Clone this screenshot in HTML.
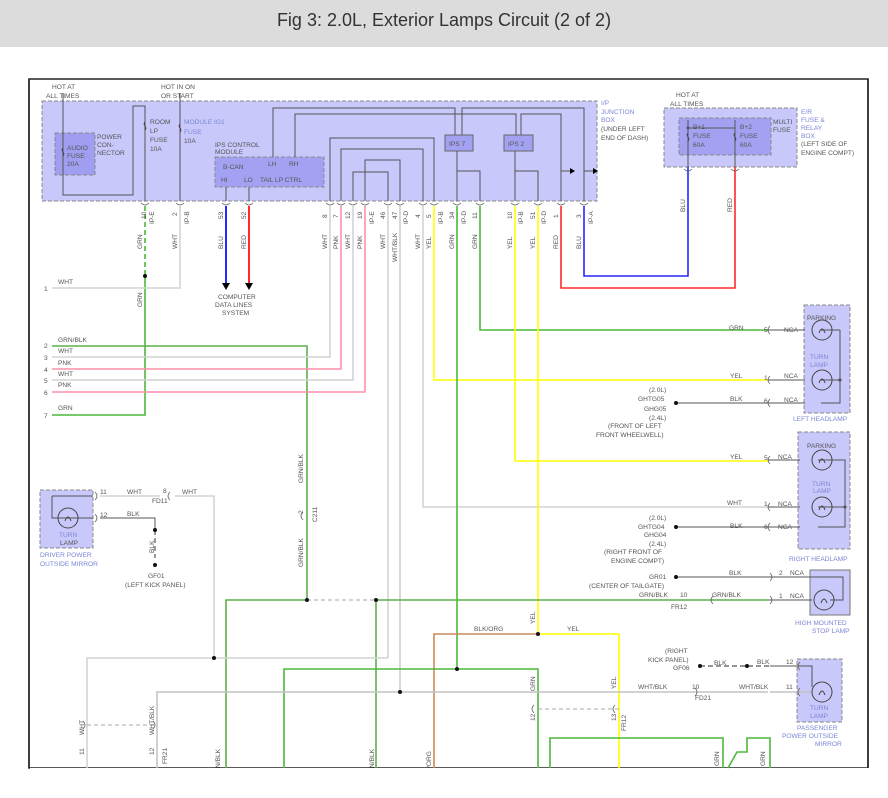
<!DOCTYPE html>
<html><head><meta charset="utf-8"><style>
html,body{margin:0;padding:0;background:#fff;width:888px;height:798px;overflow:hidden}
.t{position:absolute;left:0;top:0;width:888px;height:47px;background:#dcdcdc;font-family:"Liberation Sans",sans-serif;font-size:18px;color:#333;text-align:center;line-height:40px}
svg{position:absolute;left:0;top:0}
text{font-family:"Liberation Sans",sans-serif;font-size:6.6px;fill:#555}
.b{fill:#7b86d6}
</style></head><body>
<div class="t">Fig 3: 2.0L, Exterior Lamps Circuit (2 of 2)</div>
<svg width="888" height="798" viewBox="0 0 888 798">
<rect x="29" y="79" width="839" height="689" fill="#fff" stroke="#222" stroke-width="1.5"/>
<rect x="30" y="768" width="840" height="30" fill="#fff"/>
<line x1="29" y1="79" x2="29" y2="768" stroke="#222" stroke-width="1.5"/>
<line x1="868" y1="79" x2="868" y2="768" stroke="#222" stroke-width="1.5"/>
<g stroke="#888" stroke-dasharray="4,2" stroke-width="1">
<rect x="42" y="101" width="555" height="100" fill="#c9c8fa"/>
<rect x="55" y="133" width="40" height="42" fill="#9f9ef0"/>
<rect x="215" y="157" width="109" height="30" fill="#a3a2f2"/>
<rect x="664" y="108" width="133" height="59" fill="#c9c8fa"/>
<rect x="679" y="118" width="92" height="37" fill="#a3a2f2"/>
<rect x="804" y="305" width="46" height="108" fill="#c9c8fa"/>
<rect x="798" y="432" width="52" height="117" fill="#c9c8fa"/>
<rect x="797" y="659" width="45" height="63" fill="#c9c8fa"/>
<rect x="40" y="490" width="53" height="58" fill="#c9c8fa"/>
</g>
<rect x="810" y="570" width="40" height="45" fill="#c9c8fa" stroke="#777"/>
<rect x="445" y="135" width="28" height="16" fill="#a3a2f2" stroke="#666"/>
<rect x="504" y="135" width="29" height="16" fill="#a3a2f2" stroke="#666"/>
<g stroke="#555" fill="none" stroke-width="1">
<path d="M63 93V195H133V106H145V201"/>
<path d="M180 93V201"/>
<path d="M273 157V108H455V135"/>
<path d="M295 157V114H516V135"/>
<path d="M462 135V108H584V201"/>
<path d="M521 135V114H561V201"/>
<path d="M457 151V201M457 171H480V201M515 151V201M515 171H538V201"/>
<path d="M561 171H570M584 171H593"/>
<path d="M330 201V138H434V201M341 201V149H423V201M365 201V160H400V201M353 201V172H388V201"/>
<path d="M226 187V201M249 187V201"/>
<path d="M688 120V167M735 120V167M688 128H735"/>
<path d="M821 330H840M821 380H840M821 403H840M840 330V403H827M768 330H805M768 380H805M768 403H805"/>
<path d="M818 460H845V507H818M845 507V527H818M768 460H800M768 507H800M768 527H800"/>
<path d="M768 577H812M768 600H812M812 577H843V600H830"/>
<path d="M770 666H812V687M770 692H812"/>
<path d="M52 496H93M52 496V518H93M66 518H93"/>
<path d="M100 518H155V530"/>
<path d="M676 403H768M676 527H768M676 577H768"/>
</g>
<g fill="#555"><circle cx="840" cy="380" r="1.6"/><circle cx="845" cy="507" r="1.6"/><circle cx="688" cy="128" r="1.5"/></g>
<g stroke="#444" fill="none"><path d="M63 148c-3 3 3 5 0 8"/><path d="M145 122c-3 3 3 5 0 8"/><path d="M180 124c-3 3 3 5 0 8"/><path d="M688 133c-3 3 3 5 0 8"/><path d="M735 133c-3 3 3 5 0 8"/></g>
<g fill="none" stroke-width="1.6">
<path d="M145 206V276" stroke="#4cb83a" stroke-dasharray="5,3"/>
<path d="M145 276V415H52" stroke="#4cb83a"/>
<path d="M180 206V288H52" stroke="#d4d4d4"/>
<path d="M226 206V283" stroke="#2727ff" stroke-width="2"/>
<path d="M249 206V283" stroke="#ff2a2a" stroke-width="2"/>
<path d="M52 346H307V600" stroke="#5cb04a"/>
<path d="M52 357H330V206" stroke="#d4d4d4"/>
<path d="M52 369H341V206" stroke="#ff8fa8"/>
<path d="M52 380H353V206" stroke="#d4d4d4"/>
<path d="M52 392H365V206" stroke="#ff8fa8"/>
<path d="M388 206V658" stroke="#d4d4d4"/>
<path d="M400 206V692" stroke="#cfcfcf"/>
<path d="M423 206V507H768" stroke="#d4d4d4"/>
<path d="M434 206V380H768" stroke="#ffff00"/>
<path d="M457 206V669" stroke="#4cb83a"/>
<path d="M480 206V330H768" stroke="#4cb83a"/>
<path d="M515 206V461H768" stroke="#ffff00"/>
<path d="M538 206V634H619V768" stroke="#ffff00"/>
<path d="M561 206V288H735V167" stroke="#ff2a2a"/>
<path d="M584 206V276H688V167" stroke="#2727ff"/>
<path d="M538 634H434V768" stroke="#c98a5a"/>
<path d="M284 768V669H538V768" stroke="#4cb83a"/>
<path d="M226 768V600H307M376 600H768" stroke="#5cb04a"/>
<path d="M376 600V768" stroke="#5cb04a"/>
<path d="M307 600H376" stroke="#aaa" stroke-dasharray="4,3" stroke-width="1"/>
<path d="M157 768V692H768M812 692H770" stroke="#c4c4c4"/>
<path d="M87 768V658H388M214 658V496H175M160 496H100" stroke="#d4d4d4"/>
<path d="M550 768V738H723V768M728 768L737 752H747V738H770V768" stroke="#4cb83a"/>
<path d="M87 725H157M538 709H619" stroke="#aaa" stroke-dasharray="4,3" stroke-width="1"/>
<path d="M155 530V558" stroke="#555" stroke-dasharray="5,3" stroke-width="1.2"/>
<path d="M700 666H770" stroke="#555" stroke-dasharray="5,3" stroke-width="1.2"/>
</g>
<g fill="#000"><path d="M222 283h8l-4 7z"/><path d="M245 283h8l-4 7z"/><path d="M570 168v6l5-3z"/><path d="M593 168v6l5-3z"/></g>
<g fill="#111">
<circle cx="145" cy="276" r="2"/><circle cx="307" cy="600" r="2"/><circle cx="376" cy="600" r="2"/><circle cx="214" cy="658" r="2"/><circle cx="400" cy="692" r="2"/><circle cx="457" cy="669" r="2"/><circle cx="538" cy="634" r="2"/><circle cx="155" cy="530" r="2"/><circle cx="155" cy="565" r="2"/><circle cx="676" cy="403" r="2"/><circle cx="676" cy="527" r="2"/><circle cx="676" cy="577" r="2"/><circle cx="700" cy="666" r="2"/><circle cx="747" cy="666" r="2"/>
</g>
<g fill="none" stroke="#444" stroke-width="1">
<circle cx="822" cy="330" r="10"/><circle cx="822" cy="380" r="10"/><circle cx="822" cy="460" r="10"/><circle cx="822" cy="507" r="10"/><circle cx="824" cy="600" r="10"/><circle cx="822" cy="692" r="10"/><circle cx="68" cy="518" r="10"/>
<path d="M819 333q3-8 6 0M819 383q3-8 6 0M819 463q3-8 6 0M819 510q3-8 6 0M821 603q3-8 6 0M819 695q3-8 6 0M65 521q3-8 6 0"/>
</g>
<g fill="none" stroke="#666" stroke-width="0.8">
<path d="M141 203q4 4 8 0M176 203q4 4 8 0M222 203q4 4 8 0M245 203q4 4 8 0M326 203q4 4 8 0M337 203q4 4 8 0M349 203q4 4 8 0M361 203q4 4 8 0M384 203q4 4 8 0M396 203q4 4 8 0M419 203q4 4 8 0M430 203q4 4 8 0M453 203q4 4 8 0M476 203q4 4 8 0M511 203q4 4 8 0M534 203q4 4 8 0M557 203q4 4 8 0M580 203q4 4 8 0M684 169q4 4 8 0M731 169q4 4 8 0"/>
<path d="M770 326q-4 4 0 8M770 376q-4 4 0 8M770 399q-4 4 0 8M770 456q-4 4 0 8M770 503q-4 4 0 8M770 523q-4 4 0 8M770 573q4 4 0 8M770 596q4 4 0 8M713 596q-4 4 0 8M800 662q-4 4 0 8M800 688q-4 4 0 8M695 688q4 4 0 8M303 512q-4 4 0 8M95 492q4 4 0 8M95 514q4 4 0 8M170 492q-4 4 0 8M534 705q-4 4 0 8M615 705q-4 4 0 8M83 721q4 4 0 8M153 721q4 4 0 8"/>
</g>
<text x="52" y="89">HOT AT</text><text x="46" y="98">ALL TIMES</text>
<text x="161" y="89">HOT IN ON</text><text x="161" y="98">OR START</text>
<text x="97" y="139">POWER</text><text x="97" y="147">CON-</text><text x="97" y="155">NECTOR</text>
<text x="67" y="150">AUDIO</text><text x="67" y="158">FUSE</text><text x="67" y="166">20A</text>
<text x="150" y="124">ROOM</text><text x="150" y="133">LP</text><text x="150" y="142">FUSE</text><text x="150" y="151">10A</text>
<text x="184" y="124" class="b">MODULE IG1</text><text x="184" y="134" class="b">FUSE</text><text x="184" y="143">10A</text>
<text x="215" y="147">IPS CONTROL</text><text x="215" y="154">MODULE</text>
<text x="223" y="169">B-CAN</text><text x="221" y="182">HI</text><text x="244" y="182">LO</text><text x="260" y="182">TAIL LP CTRL</text><text x="268" y="166">LH</text><text x="289" y="166">RH</text>
<text x="449" y="146">IPS 7</text><text x="508" y="146">IPS 2</text>
<text x="601" y="105" class="b">I/P</text><text x="601" y="114" class="b">JUNCTION</text><text x="601" y="122" class="b">BOX</text><text x="601" y="131">(UNDER LEFT</text><text x="601" y="140">END OF DASH)</text>
<text x="676" y="97">HOT AT</text><text x="670" y="106">ALL TIMES</text>
<text x="693" y="129">B+1</text><text x="693" y="138">FUSE</text><text x="693" y="147">60A</text>
<text x="740" y="129">B+2</text><text x="740" y="138">FUSE</text><text x="740" y="147">60A</text>
<text x="773" y="124">MULTI</text><text x="773" y="132">FUSE</text>
<text x="801" y="114" class="b">E/R</text><text x="801" y="122" class="b">FUSE &amp;</text><text x="801" y="130" class="b">RELAY</text><text x="801" y="138" class="b">BOX</text><text x="801" y="146">(LEFT SIDE OF</text><text x="801" y="155">ENGINE COMPT)</text>
<text x="218" y="299">COMPUTER</text><text x="215" y="307">DATA LINES</text><text x="222" y="315">SYSTEM</text>
<text x="58" y="284">WHT</text><text x="44" y="291">1</text>
<text x="58" y="342">GRN/BLK</text><text x="44" y="348">2</text>
<text x="58" y="353">WHT</text><text x="44" y="360">3</text>
<text x="58" y="365">PNK</text><text x="44" y="372">4</text>
<text x="58" y="376">WHT</text><text x="44" y="383">5</text>
<text x="58" y="387">PNK</text><text x="44" y="395">6</text>
<text x="58" y="410">GRN</text><text x="44" y="418">7</text>
<text x="729" y="330">GRN</text><text x="764" y="332">5</text><text x="784" y="332">NCA</text><text x="807" y="320">PARKING</text>
<text x="810" y="359" class="b">TURN</text><text x="810" y="367" class="b">LAMP</text>
<text x="730" y="378">YEL</text><text x="764" y="380">1</text><text x="784" y="378">NCA</text>
<text x="730" y="401">BLK</text><text x="764" y="403">6</text><text x="784" y="402">NCA</text>
<text x="793" y="421" class="b">LEFT HEADLAMP</text>
<text x="649" y="392">(2.0L)</text><text x="638" y="401">GHTG05</text><text x="644" y="411">GHG05</text><text x="649" y="420">(2.4L)</text><text x="608" y="428">(FRONT OF LEFT</text><text x="596" y="437">FRONT WHEELWELL)</text>
<text x="807" y="448">PARKING</text><text x="812" y="486" class="b">TURN</text><text x="813" y="493" class="b">LAMP</text>
<text x="730" y="459">YEL</text><text x="764" y="460">5</text><text x="778" y="459">NCA</text>
<text x="727" y="505">WHT</text><text x="764" y="506">1</text><text x="778" y="506">NCA</text>
<text x="730" y="528">BLK</text><text x="764" y="529">6</text><text x="778" y="529">NCA</text>
<text x="789" y="561" class="b">RIGHT HEADLAMP</text>
<text x="649" y="520">(2.0L)</text><text x="638" y="529">GHTG04</text><text x="644" y="537">GHG04</text><text x="649" y="546">(2.4L)</text><text x="604" y="554">(RIGHT FRONT OF</text><text x="611" y="563">ENGINE COMPT)</text>
<text x="649" y="579">GR01</text><text x="589" y="588">(CENTER OF TAILGATE)</text>
<text x="729" y="575">BLK</text><text x="779" y="575">2</text><text x="790" y="575">NCA</text>
<text x="639" y="597">GRN/BLK</text><text x="680" y="597">10</text><text x="712" y="597">GRN/BLK</text><text x="779" y="598">1</text><text x="790" y="598">NCA</text>
<text x="671" y="609">FR12</text>
<text x="795" y="625" class="b">HIGH MOUNTED</text><text x="812" y="633" class="b">STOP LAMP</text>
<text x="474" y="631">BLK/ORG</text><text x="567" y="631">YEL</text>
<text x="665" y="653">(RIGHT</text><text x="648" y="662">KICK PANEL)</text><text x="673" y="670">GF06</text>
<text x="714" y="665">BLK</text><text x="757" y="664">BLK</text><text x="786" y="664">12</text>
<text x="638" y="689">WHT/BLK</text><text x="692" y="689">10</text><text x="739" y="689">WHT/BLK</text><text x="786" y="689">11</text><text x="695" y="700">FD21</text>
<text x="810" y="710" class="b">TURN</text><text x="810" y="718" class="b">LAMP</text>
<text x="797" y="730" class="b">PASSENGER</text><text x="782" y="738" class="b">POWER OUTSIDE</text><text x="815" y="746" class="b">MIRROR</text>
<text x="100" y="494">11</text><text x="127" y="494">WHT</text><text x="163" y="493">8</text><text x="182" y="494">WHT</text><text x="152" y="503">FD11</text>
<text x="100" y="517">12</text><text x="127" y="516">BLK</text>
<text x="59" y="537" class="b">TURN</text><text x="60" y="545">LAMP</text>
<text x="40" y="557" class="b">DRIVER POWER</text><text x="40" y="566" class="b">OUTSIDE MIRROR</text>
<text x="148" y="578">GF01</text><text x="125" y="587">(LEFT KICK PANEL)</text>
<g transform="rotate(-90)">
<text x="-219" y="146">10</text><text x="-224" y="154">IP-E</text><text x="-249" y="142">GRN</text><text x="-216" y="177">2</text><text x="-224" y="189">IP-B</text><text x="-249" y="177">WHT</text>
<text x="-219" y="223">53</text><text x="-219" y="246">52</text><text x="-249" y="223">BLU</text><text x="-249" y="246">RED</text>
<text x="-218" y="327">8</text><text x="-218" y="338">7</text><text x="-219" y="350">12</text><text x="-219" y="362">19</text><text x="-224" y="374">IP-E</text><text x="-219" y="385">46</text><text x="-219" y="397">47</text><text x="-224" y="408">IP-D</text>
<text x="-249" y="327">WHT</text><text x="-249" y="338">PNK</text><text x="-249" y="350">WHT</text><text x="-249" y="362">PNK</text><text x="-249" y="385">WHT</text><text x="-262" y="397">WHT/BLK</text>
<text x="-218" y="420">4</text><text x="-218" y="431">5</text><text x="-224" y="443">IP-B</text><text x="-219" y="454">34</text><text x="-224" y="466">IP-D</text><text x="-219" y="477">11</text>
<text x="-249" y="420">WHT</text><text x="-249" y="431">YEL</text><text x="-249" y="454">GRN</text><text x="-249" y="477">GRN</text>
<text x="-219" y="512">10</text><text x="-224" y="523">IP-B</text><text x="-219" y="535">51</text><text x="-224" y="546">IP-D</text><text x="-218" y="558">1</text><text x="-218" y="581">3</text><text x="-224" y="593">IP-A</text>
<text x="-249" y="512">YEL</text><text x="-249" y="535">YEL</text><text x="-249" y="558">RED</text><text x="-249" y="581">BLU</text>
<text x="-212" y="685">BLU</text><text x="-212" y="732">RED</text>
<text x="-307" y="142">GRN</text>
<text x="-483" y="303">GRN/BLK</text><text x="-514" y="303">2</text><text x="-522" y="317">C211</text><text x="-567" y="303">GRN/BLK</text>
<text x="-553" y="154">BLK</text>
<text x="-735" y="84">WHT</text><text x="-755" y="84">11</text><text x="-755" y="154">12</text><text x="-764" y="167">FR21</text><text x="-735" y="154">WHT/BLK</text>
<text x="-768" y="220">N/BLK</text><text x="-768" y="374">N/BLK</text><text x="-768" y="431">/ORG</text>
<text x="-624" y="535">YEL</text><text x="-691" y="535">GRN</text><text x="-689" y="616">YEL</text><text x="-721" y="535">12</text><text x="-721" y="616">13</text><text x="-731" y="626">FR12</text>
<text x="-766" y="719">GRN</text><text x="-766" y="765">GRN</text>
</g>
</svg>
</body></html>
